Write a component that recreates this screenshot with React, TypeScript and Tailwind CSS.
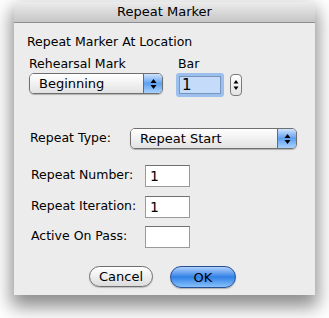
import React from 'react';

const font = "font-['Lucida_Grande','DejaVu_Sans',sans-serif]";

const Arrows: React.FC<{ color?: string }> = ({ color = '#000' }) => (
  <svg width="7" height="12" viewBox="0 0 7 12">
    <path d="M3.5 1 L6.5 5 L0.5 5 Z" fill={color} />
    <path d="M3.5 11 L6.5 7 L0.5 7 Z" fill={color} />
  </svg>
);

const Popup: React.FC<{ label: string; width: string }> = ({ label, width }) => (
  <div
    className={`${width} h-[21px] flex rounded-[5px] border border-[#6f6f6f] overflow-hidden shadow-[0_1px_1px_rgba(0,0,0,0.25)]`}
  >
    <div className="flex-1 flex items-center pl-[9px] text-[13px] bg-gradient-to-b from-white via-[#f1f1f1] to-[#e2e2e2]">
      {label}
    </div>
    <div className="w-[19px] flex items-center justify-center border-l border-[#4a6fa8] bg-gradient-to-b from-[#cfe3fb] via-[#5f9ff0] to-[#a9d2fb]">
      <Arrows />
    </div>
  </div>
);

const Field: React.FC<{ value?: string }> = ({ value }) => (
  <div className="w-[45px] h-[22px] bg-white border border-[#9a9a9a] border-t-[#707070] flex items-center pl-[4px] text-[14px] leading-none">
    {value}
  </div>
);

const FieldRow: React.FC<{ label: string; value?: string; className?: string }> = ({
  label,
  value,
  className,
}) => (
  <div className={`flex items-center h-[23px] ${className ?? ''}`}>
    <span className="w-[131px] pl-[17px]">{label}</span>
    <Field value={value} />
  </div>
);

export default function App() {
  return (
    <div className={`w-[329px] h-[318px] bg-white pt-[2px] pl-[14px] text-black text-[12.5px] ${font}`}>
      <div className="w-[301px] h-[293px] bg-[#ececec] rounded-t-[5px] shadow-[0_9px_18px_3px_rgba(0,0,0,0.45)] flex flex-col">
        <div className="h-[21px] rounded-t-[5px] border-b border-[#8e8e8e] bg-gradient-to-b from-[#ececec] via-[#d9d9d9] to-[#c6c6c6] flex items-center justify-center text-[13px]">
          Repeat Marker
        </div>

        <div className="mt-[11px] pl-[13px] h-[16px] leading-[16px]">
          Repeat Marker At Location
        </div>

        <div className="mt-[6px] pl-[15px] flex">
          <div className="w-[147px] flex flex-col">
            <span className="h-[16px] leading-[16px]">Rehearsal Mark</span>
            <div className="mt-[1px]">
              <Popup label="Beginning" width="w-[134px]" />
            </div>
          </div>
          <div className="flex flex-col">
            <span className="h-[16px] leading-[16px] pl-[2px]">Bar</span>
            <div className="mt-[1px] flex items-start">
              <div className="w-[48px] h-[24px] rounded-[3px] bg-[#9cc0ee] p-[3px]">
                <div className="w-full h-full bg-[#c5dbfa] border border-[#7a94bd] flex items-center pl-[2px] text-[15px] leading-none">
                  1
                </div>
              </div>
              <div className="ml-[6px] mt-[1px] w-[12px] h-[22px] rounded-[4px] border border-[#7a7a7a] bg-gradient-to-b from-white to-[#e4e4e4] flex items-center justify-center">
                <svg width="6" height="14" viewBox="0 0 6 14">
                  <path d="M3 2 L5.5 5.5 L0.5 5.5 Z" fill="#000" />
                  <path d="M3 12 L5.5 8.5 L0.5 8.5 Z" fill="#000" />
                </svg>
              </div>
            </div>
          </div>
        </div>

        <div className="mt-[31px] flex items-center">
          <span className="w-[116px] pl-[16px]">Repeat Type:</span>
          <Popup label="Repeat Start" width="w-[167px]" />
        </div>

        <FieldRow className="mt-[15px]" label="Repeat Number:" value="1" />
        <FieldRow className="mt-[8px]" label="Repeat Iteration:" value="1" />
        <FieldRow className="mt-[7px]" label="Active On Pass:" />

        <div className="mt-[18px] pl-[75px] flex gap-[17px]">
          <button className="w-[64px] h-[21px] rounded-full border border-[#6f6f6f] bg-gradient-to-b from-white via-[#eeeeee] to-[#dcdcdc] text-[13px] leading-none shadow-[0_1px_1px_rgba(0,0,0,0.2)]">
            Cancel
          </button>
          <button className="w-[66px] h-[22px] rounded-full border border-[#274f95] bg-gradient-to-b from-[#b0d0fb] via-[#2f80e6] to-[#86c2fb] text-[13px] leading-none shadow-[0_1px_1px_rgba(0,0,0,0.25)]">
            OK
          </button>
        </div>
      </div>
    </div>
  );
}
